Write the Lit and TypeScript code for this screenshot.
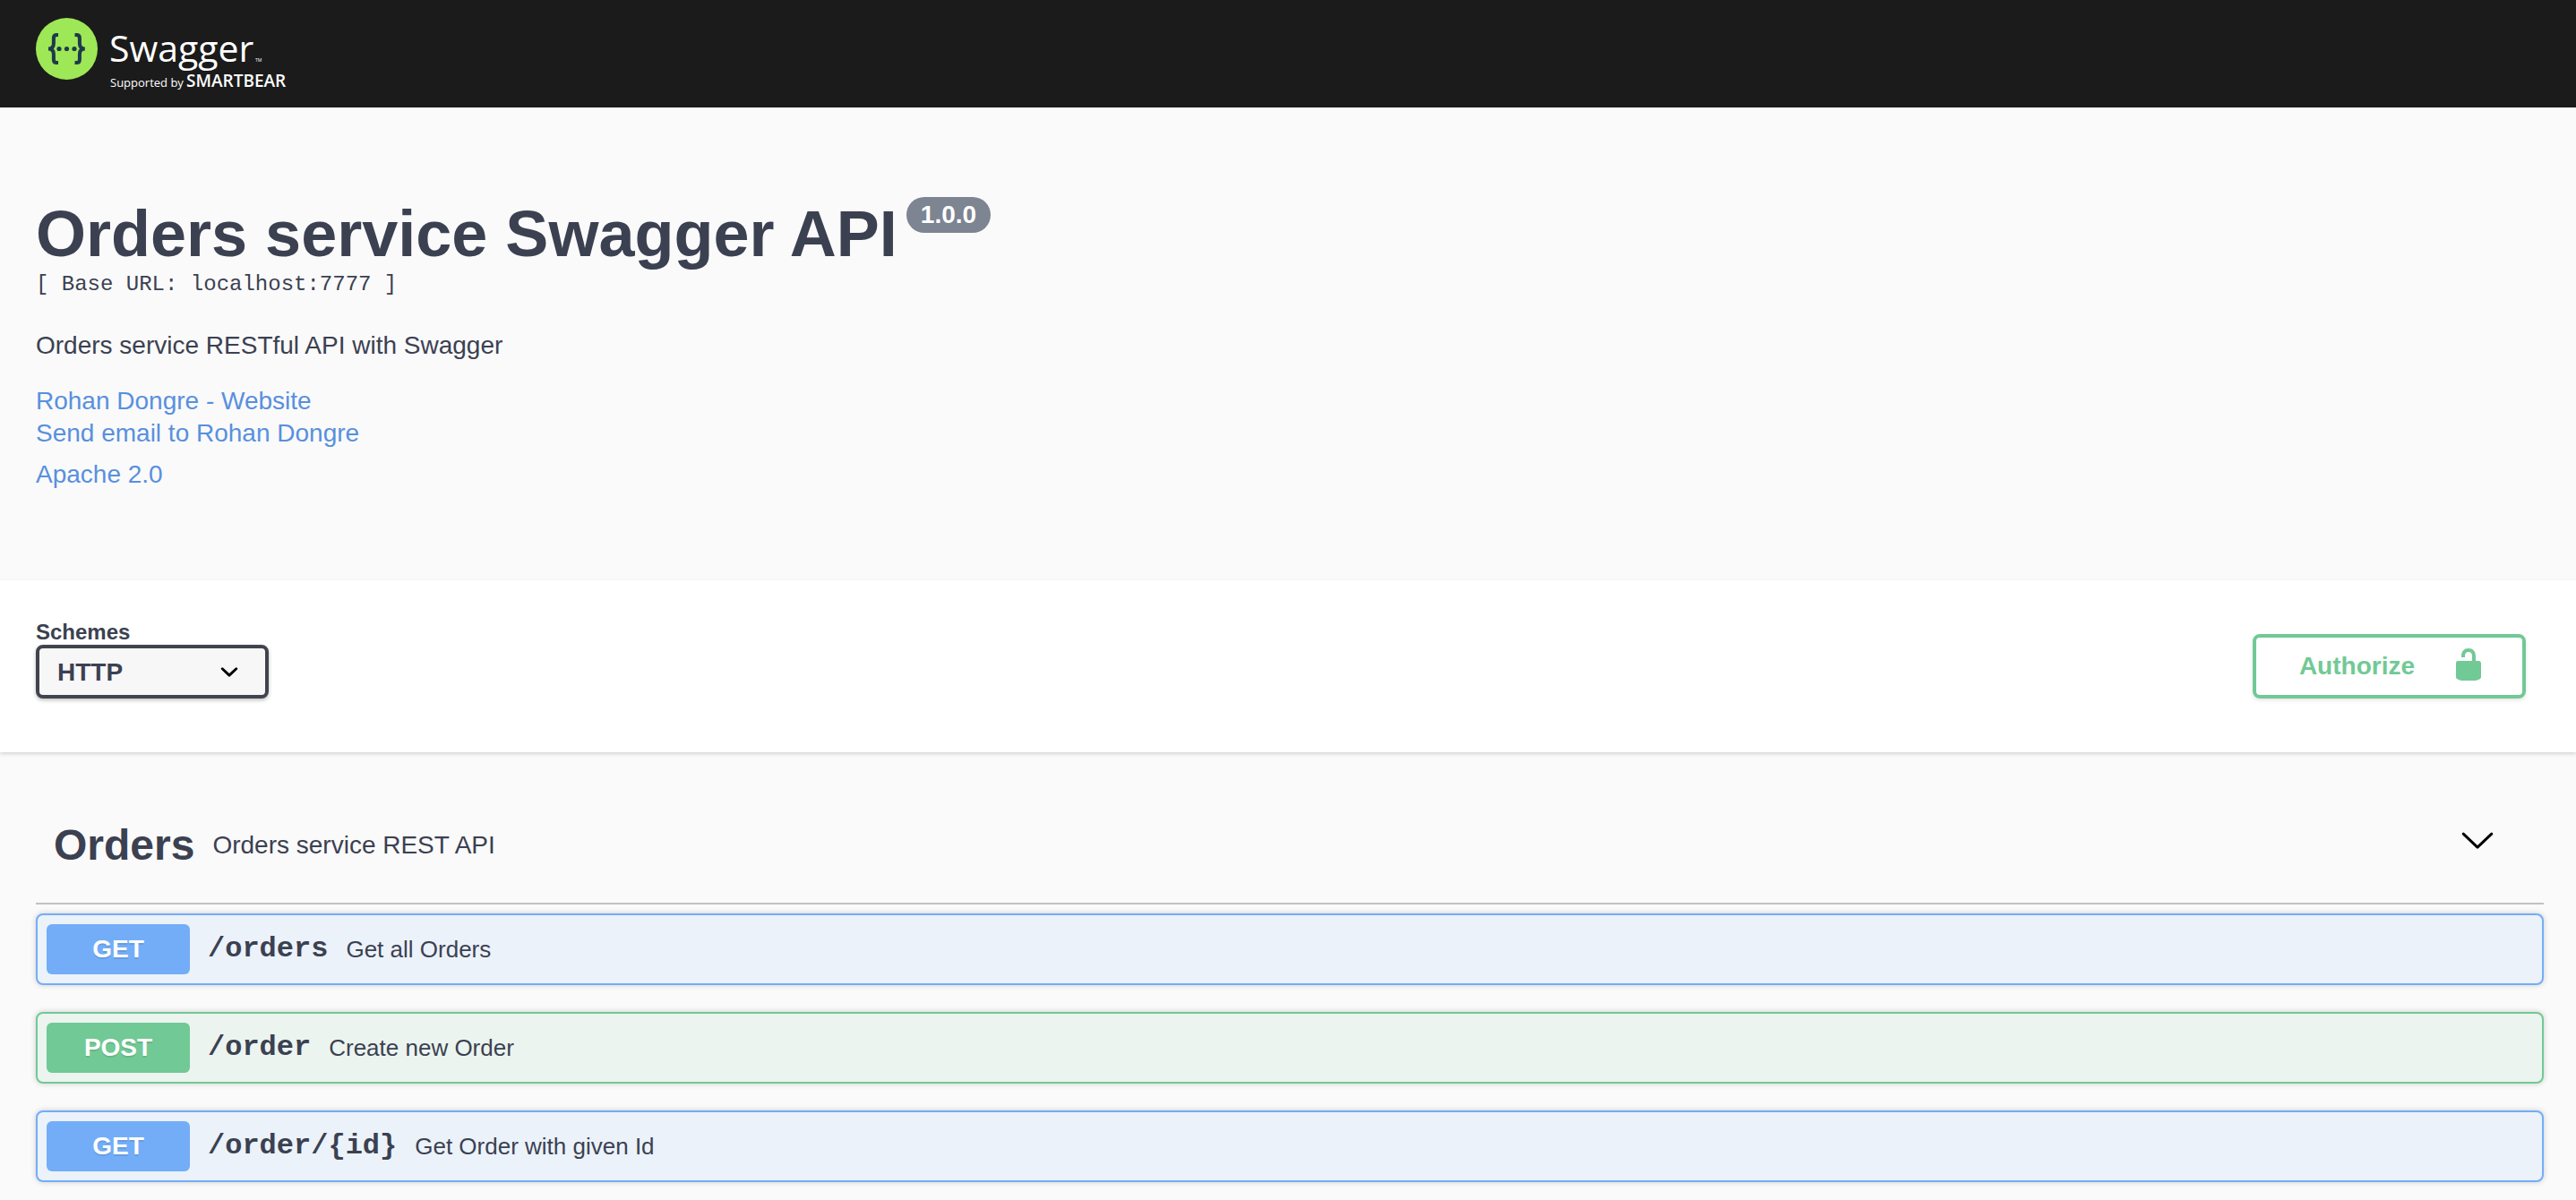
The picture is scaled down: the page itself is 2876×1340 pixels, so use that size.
import { LitElement, html, css } from "lit";
import { customElement, property } from "lit/decorators.js";

interface Operation {
  method: "get" | "post";
  path: string;
  summary: string;
}

const operations: Operation[] = [
  { method: "get", path: "/orders", summary: "Get all Orders" },
  { method: "post", path: "/order", summary: "Create new Order" },
  { method: "get", path: "/order/{id}", summary: "Get Order with given Id" },
];

@customElement("api-topbar")
export class ApiTopbar extends LitElement {
  static styles = css`
    :host {
      display: block;
      background: #1b1b1b;
    }
    .bar {
      padding: 10px 40px;
    }
    .logo-link {
      display: inline-block;
      vertical-align: top;
    }
    .logo {
      display: block;
      width: 290px;
      height: 100px;
      font-family: "Open Sans", "Noto Sans", sans-serif;
      fill: #fff;
    }
    .disc {
      fill: #9ee756;
    }
    .brace {
      fill: none;
      stroke: #1f3a4a;
      stroke-width: 4;
    }
    .dots {
      fill: #1f3a4a;
    }
    .name {
      font-size: 41px;
      font-weight: 400;
    }
    .mark {
      font-size: 5px;
    }
    .by {
      font-size: 13px;
    }
    .company {
      font-size: 19px;
      font-weight: 600;
    }
  `;

  render() {
    return html`
      <header class="bar">
        <a class="logo-link" href="#" aria-label="Swagger">
          <svg class="logo" viewBox="40 10 290 100">
            <circle class="disc" cx="74.5" cy="54.5" r="34.5" />
            <path
              class="brace"
              d="M65 39.1H63.2C60.8 39.1 59.9 40.4 59.9 42.6V48.6C59.9 52.4 58.4 54.5 54 54.5C58.4 54.5 59.9 56.6 59.9 60.4V66.4C59.9 68.6 60.8 69.9 63.2 69.9H65"
            />
            <path
              class="brace"
              d="M83.5 39.1H85.6C88 39.1 88.9 40.4 88.9 42.6V48.6C88.9 52.4 90.4 54.5 94.8 54.5C90.4 54.5 88.9 56.6 88.9 60.4V66.4C88.9 68.6 88 69.9 85.6 69.9H83.5"
            />
            <g class="dots">
              <circle cx="66" cy="54.5" r="2.6" />
              <circle cx="74.5" cy="54.5" r="2.6" />
              <circle cx="83" cy="54.5" r="2.6" />
            </g>
            <text class="name" x="122" y="69">Swagger</text>
            <text class="mark" x="285" y="69">TM</text>
            <text class="by" x="123" y="97">Supported by</text>
            <text class="company" x="208" y="97">SMARTBEAR</text>
          </svg>
        </a>
      </header>
    `;
  }
}

@customElement("api-info")
export class ApiInfo extends LitElement {
  static styles = css`
    :host {
      display: block;
    }
    .info {
      padding: 100px 40px;
    }
    .heading {
      display: flex;
      align-items: flex-start;
      gap: 10px;
    }
    .title {
      margin: 0;
      font-size: 72px;
      line-height: 82px;
      font-weight: 700;
    }
    .version {
      padding: 0 16px;
      border-radius: 20px;
      background: #7d8492;
      color: #fff;
      font-size: 28px;
      line-height: 40px;
      font-weight: 700;
    }
    .base {
      margin: 0;
      font-family: "Liberation Mono", "Courier New", monospace;
      font-size: 24px;
      line-height: 32px;
    }
    .text {
      margin: 34px 0 26px;
      font-size: 28px;
      line-height: 36px;
    }
    .links {
      display: flex;
      flex-direction: column;
      align-items: flex-start;
      font-size: 28px;
      line-height: 36px;
    }
    .link {
      color: #5890de;
      text-decoration: none;
    }
    .license {
      margin-top: 10px;
    }
  `;

  render() {
    return html`
      <section class="info">
        <div class="heading">
          <h1 class="title">Orders service Swagger API</h1>
          <span class="version">1.0.0</span>
        </div>
        <p class="base">[ Base URL: localhost:7777 ]</p>
        <p class="text">Orders service RESTful API with Swagger</p>
        <div class="links">
          <a class="link" href="#">Rohan Dongre - Website</a>
          <a class="link" href="#">Send email to Rohan Dongre</a>
          <a class="link license" href="#">Apache 2.0</a>
        </div>
      </section>
    `;
  }
}

@customElement("api-schemes")
export class ApiSchemes extends LitElement {
  static styles = css`
    :host {
      display: block;
      position: relative;
      background: #fff;
      box-shadow: 0 2px 4px rgba(0, 0, 0, 0.15);
    }
    .row {
      display: flex;
      justify-content: space-between;
      align-items: flex-end;
      padding: 44px 56px 60px 40px;
    }
    .schemes {
      display: flex;
      flex-direction: column;
    }
    .label {
      font-size: 24px;
      line-height: 28px;
      font-weight: 700;
    }
    .field {
      display: grid;
      align-items: center;
    }
    .select,
    .arrow {
      grid-area: 1 / 1;
    }
    .select {
      appearance: none;
      box-sizing: border-box;
      width: 260px;
      height: 60px;
      margin: 0;
      padding: 0 80px 0 20px;
      border: 4px solid #41444e;
      border-radius: 8px;
      background: #f7f7f7;
      box-shadow: 0 2px 4px rgba(0, 0, 0, 0.25);
      color: inherit;
      font: inherit;
      font-size: 28px;
      font-weight: 700;
    }
    .arrow {
      justify-self: end;
      width: 40px;
      height: 40px;
      margin-right: 24px;
      pointer-events: none;
    }
    .authorize {
      display: flex;
      align-items: flex-start;
      gap: 40px;
      box-sizing: border-box;
      height: 72px;
      margin: 0;
      padding: 10px 40px 10px 48px;
      border: 4px solid #71c995;
      border-radius: 8px;
      background: transparent;
      box-shadow: 0 2px 4px rgba(0, 0, 0, 0.1);
      color: #71c995;
      font: inherit;
      font-size: 28px;
      line-height: 44px;
      font-weight: 700;
    }
    .lock {
      width: 40px;
      height: 40px;
      fill: currentColor;
    }
  `;

  render() {
    return html`
      <section class="row">
        <div class="schemes">
          <label class="label" for="schemes">Schemes</label>
          <div class="field">
            <select class="select" id="schemes">
              <option>HTTP</option>
            </select>
            <svg class="arrow" viewBox="0 0 20 20" aria-hidden="true">
              <path
                d="M13.418 7.859a.695.695 0 0 1 .978 0 .68.68 0 0 1 0 .969l-3.908 3.83a.697.697 0 0 1-.979 0l-3.908-3.83a.68.68 0 0 1 0-.969.695.695 0 0 1 .978 0L10 11l3.418-3.141z"
              />
            </svg>
          </div>
        </div>
        <button class="authorize" type="button">
          <span>Authorize</span>
          <svg class="lock" viewBox="0 0 20 20" aria-hidden="true">
            <path
              d="M15.8 8H14V5.6C14 2.703 12.665 1 10 1 7.334 1 6 2.703 6 5.6V6h2v-.801C8 3.754 8.797 3 10 3c1.203 0 2 .754 2 2.199V8H4c-.553 0-1 .646-1 1.199V17c0 .549.428 1.139.951 1.307l1.197.387C5.672 18.861 6.55 19 7.1 19h5.8c.549 0 1.428-.139 1.951-.307l1.196-.387c.524-.167.953-.757.953-1.306V9.199C17 8.646 16.352 8 15.8 8z"
            />
          </svg>
        </button>
      </section>
    `;
  }
}

@customElement("api-operation")
export class ApiOperation extends LitElement {
  static styles = css`
    :host {
      display: block;
    }
    .block {
      display: flex;
      align-items: center;
      gap: 20px;
      box-sizing: border-box;
      width: 100%;
      margin: 0;
      padding: 10px;
      border: 2px solid;
      border-radius: 8px;
      box-shadow: 0 0 6px rgba(0, 0, 0, 0.19);
      color: inherit;
      font: inherit;
      text-align: left;
    }
    .get {
      border-color: #73adf8;
      background: #ebf2fa;
    }
    .post {
      border-color: #71c995;
      background: #ebf4ef;
    }
    .method {
      min-width: 160px;
      border-radius: 6px;
      color: #fff;
      font-size: 28px;
      line-height: 56px;
      font-weight: 700;
      text-align: center;
      text-shadow: 0 2px 0 rgba(0, 0, 0, 0.1);
    }
    .get .method {
      background: #73adf8;
    }
    .post .method {
      background: #71c995;
    }
    .path {
      font-family: "Liberation Mono", "Courier New", monospace;
      font-size: 32px;
      line-height: 36px;
      font-weight: 700;
    }
    .summary {
      font-size: 26px;
      line-height: 36px;
    }
  `;

  @property({ attribute: false }) operation!: Operation;

  render() {
    const { method, path, summary } = this.operation;
    return html`
      <button class="block ${method}" type="button">
        <span class="method">${method.toUpperCase()}</span>
        <span class="path">${path}</span>
        <span class="summary">${summary}</span>
      </button>
    `;
  }
}

@customElement("api-tag")
export class ApiTag extends LitElement {
  static styles = css`
    :host {
      display: block;
    }
    .section {
      padding: 40px 36px 20px 40px;
    }
    .header {
      display: flex;
      align-items: center;
      gap: 20px;
      padding: 36px 54px 36px 20px;
      border-bottom: 2px solid rgba(59, 65, 81, 0.3);
    }
    .name {
      margin: 0;
      font-size: 48px;
      line-height: 56px;
      font-weight: 700;
    }
    .note {
      flex: 1;
      margin: 0;
      font-size: 28px;
      line-height: 36px;
    }
    .toggle {
      margin: 0;
      padding: 0;
      border: 0;
      background: none;
      color: #000;
    }
    .chevron {
      display: block;
      width: 40px;
      height: 40px;
      fill: none;
      stroke: currentColor;
      stroke-width: 3;
      stroke-linecap: round;
      stroke-linejoin: round;
    }
    .list {
      display: flex;
      flex-direction: column;
      gap: 30px;
      padding-top: 10px;
    }
  `;

  render() {
    return html`
      <section class="section">
        <div class="header">
          <h2 class="name">Orders</h2>
          <p class="note">Orders service REST API</p>
          <button class="toggle" type="button" aria-label="Collapse operation">
            <svg class="chevron" viewBox="0 0 40 40">
              <path d="M4.2 7.2L20 22.2L35.8 7.2" />
            </svg>
          </button>
        </div>
        <div class="list">
          ${operations.map(
            (operation) =>
              html`<api-operation .operation=${operation}></api-operation>`,
          )}
        </div>
      </section>
    `;
  }
}

@customElement("app-root")
export class AppRoot extends LitElement {
  static styles = css`
    :host {
      display: block;
      min-height: 100vh;
      background: #fafafa;
      color: #3b4151;
      font-family: "Liberation Sans", Arial, Helvetica, sans-serif;
    }
  `;

  render() {
    return html`
      <api-topbar></api-topbar>
      <main>
        <api-info></api-info>
        <api-schemes></api-schemes>
        <api-tag></api-tag>
      </main>
    `;
  }
}
